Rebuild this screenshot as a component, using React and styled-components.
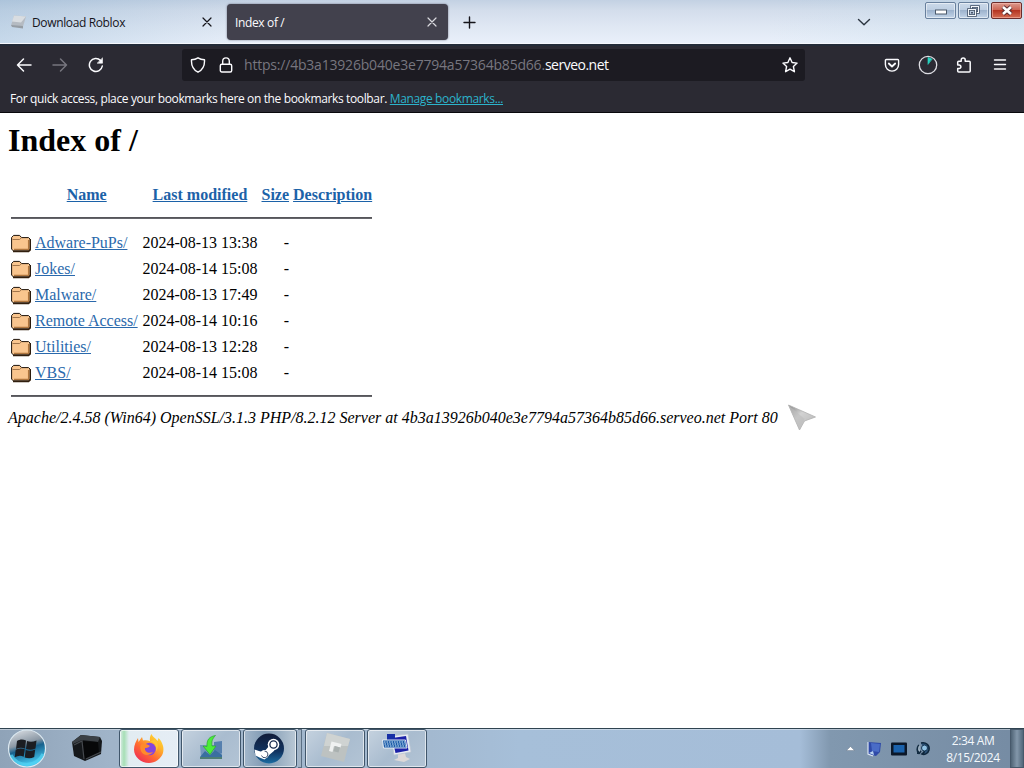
import React from "react";
import styled, { createGlobalStyle, css } from "styled-components";

const GlobalStyle = createGlobalStyle`
  * {
    box-sizing: border-box;
  }
  body {
    margin: 0;
    overflow: hidden;
    background: #fff;
  }
`;

const Screen = styled.div`
  width: 1024px;
  height: 768px;
  display: flex;
  flex-direction: column;
  overflow: hidden;
  position: relative;
  font-family: "Open Sans", "Noto Sans", sans-serif;
  font-size: 12px;
  letter-spacing: -0.36px;
`;

/* ---------- title bar ---------- */

const TitleBar = styled.div`
  height: 44px;
  flex: none;
  display: flex;
  border-bottom: 1px solid #f5f7fc;
  background:
    linear-gradient(90deg, rgba(120, 165, 200, 0.3), rgba(255, 255, 255, 0) 25%, rgba(255, 255, 255, 0) 75%, rgba(190, 220, 235, 0.3)),
    linear-gradient(180deg, #c3d1e3 0, #d3ddeb 10px, #dfe7f3 26px, #e9f0fa 43px);
`;

const Tab = styled.div`
  display: flex;
  align-items: center;
  height: 36px;
  margin-top: 4px;
  border-radius: 4px;
  color: #15141a;
  width: ${({ $width }) => $width}px;
  padding: 0 ${({ $right }) => $right}px 0 ${({ $left }) => $left}px;
  ${({ $active }) =>
    $active &&
    css`
      color: #fbfbfe;
      background: #42414d;
      box-shadow: 0 0 2px rgba(50, 50, 70, 0.7);
    `}
`;

const TabTitle = styled.span`
  flex: 1;
  padding-top: 2px;
  line-height: 18px;
  white-space: nowrap;
`;

const Favicon = styled.svg`
  width: 17px;
  height: 16px;
  margin-right: 5px;
`;

const Icon = styled.svg`
  display: block;
  flex: none;
  width: ${({ $size }) => $size || 16}px;
  height: ${({ $size }) => $size || 16}px;
  fill: none;
  stroke: currentColor;
  stroke-width: ${({ $stroke }) => $stroke || 1.4};
  stroke-linecap: round;
  stroke-linejoin: round;
`;

const CloseIcon = styled(Icon)`
  color: ${({ $color }) => $color};
`;

const LockIcon = styled(Icon)`
  margin-left: 12px;
`;

const NewTab = styled.div`
  padding: 14px 0 0 13px;
  color: #15141a;
  flex: 1;
`;

const TabList = styled.div`
  padding: 14px 53px 0 0;
  color: #2b3540;
`;

const WindowButtons = styled.div`
  display: flex;
  gap: 2px;
  padding: 2px 2px 0 0;
  align-items: flex-start;
`;

const WindowButton = styled.div`
  width: 31px;
  height: 17px;
  display: flex;
  align-items: center;
  justify-content: center;
  border: 1px solid #68809d;
  border-radius: 2px;
  box-shadow: inset 0 0 0 1px rgba(255, 255, 255, 0.5);
  background: linear-gradient(180deg, #cbd9e9 0, #bdcee2 45%, #9db3cd 50%, #c2d4e8 100%);
  ${({ $close }) =>
    $close &&
    css`
      border-color: #6b2c2b;
      box-shadow: inset 0 0 0 1px rgba(255, 200, 190, 0.5);
      background: linear-gradient(180deg, #dc9a8e 0, #cc6655 45%, #b53522 50%, #d46c52 100%);
    `}
`;

/* ---------- toolbars ---------- */

const NavBar = styled.div`
  height: 41px;
  flex: none;
  display: flex;
  align-items: center;
  padding-bottom: 2px;
  border-top: 2px solid #232b38;
  background: #2b2a33;
  color: #fbfbfe;
`;

const NavButtons = styled.div`
  width: 182px;
  display: flex;
  gap: 20px;
  padding-left: 16px;
`;

const Dim = styled.span`
  color: #77767f;
`;

const UrlBar = styled.div`
  width: 623px;
  height: 32px;
  display: flex;
  align-items: center;
  padding: 0 7px 0 8px;
  background: #1c1b22;
  border-radius: 3px;
`;

const Url = styled.span`
  flex: 1;
  padding: 1px 0 0 10px;
  font-size: 14px;
  line-height: 20px;
  white-space: nowrap;
  letter-spacing: -0.2px;
`;

const Host = styled.span`
  letter-spacing: -0.5px;
`;

const Extensions = styled.div`
  flex: 1;
  display: flex;
  align-items: center;
  justify-content: flex-end;
  gap: 18px;
  padding-right: 16px;

  svg:last-child {
    margin-left: 2px;
  }
`;

const BookmarksBar = styled.div`
  height: 28px;
  flex: none;
  padding: 5px 10px 0;
  line-height: 18px;
  color: #fbfbfe;
  background: #2b2a33;
  border-bottom: 1px solid #08080c;
  white-space: nowrap;
`;

const ManageLink = styled.a`
  color: #2cb3cb;
  text-decoration: underline;
`;

/* ---------- directory listing ---------- */

const Page = styled.main`
  flex: 1;
  padding: 9px 8px 8px;
  background: #fff;
  color: #000;
  font: 16px/18px "Liberation Serif", "Times New Roman", serif;
  letter-spacing: 0;
`;

const Heading = styled.h1`
  margin: 0 0 21px;
  font-size: 32px;
  line-height: 37px;
`;

const Listing = styled.table`
  border-spacing: 2px;
  border-collapse: separate;

  th,
  td {
    padding: 3px 1px 1px;
    height: 24px;
    white-space: nowrap;
  }

  td:first-child {
    padding-top: 1px;
  }

  th:nth-child(2) {
    min-width: 105.4px;
  }
`;

const RightCell = styled.td`
  text-align: right;
`;

const Rule = styled.hr`
  margin: 8px 0;
  height: 2px;
  border: 0;
  background: #65656a;
  border-top: 1px solid #55555a;
`;

const RuleCell = styled.th`
  && {
    height: 20px;
    padding-top: 1px;
  }
`;

const PageLink = styled.a`
  color: ${({ $head }) => ($head ? "#1c62a8" : "#2a69ac")};
  text-decoration: underline;
`;

const FolderSvg = styled.svg`
  display: block;
  width: 20px;
  height: 22px;
`;

const Address = styled.address`
  margin-top: 1px;
  font-style: italic;
  white-space: nowrap;
`;

/* ---------- taskbar ---------- */

const TaskBar = styled.div`
  height: 40px;
  flex: none;
  display: flex;
  border-top: 1px solid #2f4350;
  box-shadow: inset 0 1px 0 rgba(255, 255, 255, 0.4);
  background: linear-gradient(
    90deg,
    #8fa3b8 0,
    #a0b4c9 110px,
    #a3b9d0 430px,
    #a6bfd9 520px,
    #a5bdd8 800px,
    #8198af 830px,
    #758ba3 1024px
  );
`;

const StartButton = styled.div`
  width: 67px;
  padding: 0 0 0 7px;
`;

const Pinned = styled.div`
  width: 52px;
  padding: 4px 0 0 4px;
`;

const TaskButton = styled.div`
  width: ${({ $width }) => $width || 60}px;
  height: 39px;
  margin-right: 2px;
  padding-bottom: 2px;
  display: flex;
  align-items: center;
  justify-content: center;
  border: 1px solid #40566b;
  border-radius: 3px;
  box-shadow: inset 0 0 0 1px rgba(255, 255, 255, 0.6);
  background: ${({ $bg }) => $bg || "linear-gradient(135deg, #c5d2df, #a9bccf 50%, #b3c4d5)"};
`;

const Stack = styled.div`
  width: 4px;
  height: 39px;
  margin: 0 3px 0 -1px;
  border: 1px solid #5a6f84;
  border-left: 0;
  background: #a3b4c5;
`;

const Tray = styled.div`
  margin-left: auto;
  display: flex;
  align-items: center;
  gap: 9px;
`;

const TrayArrow = styled.svg`
  margin-right: 2px;
`;

const Clock = styled.div`
  width: 56px;
  margin-left: 4px;
  text-align: center;
  line-height: 17px;
  color: #f4f8fc;
  white-space: nowrap;
`;

const ShowDesktop = styled.div`
  width: 14px;
  height: 39px;
  border: 1px solid #47596b;
  background: linear-gradient(90deg, #4f6375, #8397aa 50%, #52677a);
`;

/* the mouse pointer floats over the page */
const Pointer = styled.svg`
  position: absolute;
  left: 786px;
  top: 402px;
  width: 34px;
  height: 32px;
`;

const rows = [
  ["Adware-PuPs/", "2024-08-13 13:38"],
  ["Jokes/", "2024-08-14 15:08"],
  ["Malware/", "2024-08-13 17:49"],
  ["Remote Access/", "2024-08-14 10:16"],
  ["Utilities/", "2024-08-13 12:28"],
  ["VBS/", "2024-08-14 15:08"],
];

const Close = ({ color }) => (
  <CloseIcon $size={10} $stroke={1.2} $color={color} viewBox="0 0 10 10">
    <path d="M1 1l8 8M9 1L1 9" />
  </CloseIcon>
);

const Folder = () => (
  <FolderSvg viewBox="0 0 20 22">
    <path d="M2 20.5h15.500l2-2V8" fill="none" stroke="#3a2410" strokeWidth="1.6" />
    <path d="M.6 18V6.500L2.600 4.400h6l2 2.200h7L19 8v10l-1.400 1.800H2.200z" fill="#f9c58e" stroke="#1c120a" />
    <path d="M1.500 8.500h7l2-1.800" fill="none" stroke="#8a6038" strokeWidth=".8" />
    <path d="M17.600 9v9.400H3" fill="none" stroke="#b0763e" strokeWidth="1.300" />
  </FolderSvg>
);

function Browser() {
  return (
    <>
      <TitleBar>
        <Tab $width={227} $left={10} $right={15}>
          <Favicon viewBox="0 0 17 16">
            <path d="M4 1.500l12 1-3 10-12-1z" fill="#b5bbc2" />
            <path d="M4 1.500l12 1-5 6-9-1z" fill="#d9dde1" />
            <path d="M1 11l12 1 0 2.500-11-1.500z" fill="#969da4" />
          </Favicon>
          <TabTitle>Download Roblox</TabTitle>
          <Close color="#15141a" />
        </Tab>
        <Tab $width={221} $left={8} $right={11} $active>
          <TabTitle>Index of /</TabTitle>
          <Close color="#d9d9de" />
        </Tab>
        <NewTab>
          <Icon viewBox="0 0 16 16">
            <path d="M8.500 3v11M3 8.500h11" />
          </Icon>
        </NewTab>
        <TabList>
          <Icon viewBox="0 0 16 16">
            <path d="M2.500 5.500L8 10.800l5.500-5.300" />
          </Icon>
        </TabList>
        <WindowButtons>
          <WindowButton>
            <svg width="14" height="8">
              <rect x="1.500" y="3" width="11" height="4" fill="#fff" stroke="#4c5a6b" />
            </svg>
          </WindowButton>
          <WindowButton>
            <svg width="13" height="12">
              <rect x="4.500" y="1.500" width="7" height="6" fill="none" stroke="#46556a" strokeWidth="2.600" />
              <rect x="4.500" y="1.500" width="7" height="6" fill="none" stroke="#f4f7fa" />
              <rect x="1.500" y="4.500" width="7" height="6" fill="#b5c5d8" stroke="#46556a" strokeWidth="2.600" />
              <rect x="1.500" y="4.500" width="7" height="6" fill="none" stroke="#f4f7fa" />
              <rect x="4" y="7" width="2" height="1.500" fill="#46556a" />
            </svg>
          </WindowButton>
          <WindowButton $close>
            <svg width="14" height="11">
              <path d="M3 2l8 7M11 2L3 9" stroke="#5a2c30" strokeWidth="4.500" />
              <path d="M3 2l8 7M11 2L3 9" stroke="#fff" strokeWidth="2.600" />
            </svg>
          </WindowButton>
        </WindowButtons>
      </TitleBar>

      <NavBar>
        <NavButtons>
          <Icon viewBox="0 0 16 16" $stroke={1.5}>
            <path d="M1.500 8h13.500M7.500 2L1.500 8l6 6" />
          </Icon>
          <Dim>
            <Icon viewBox="0 0 16 16" $stroke={1.5}>
              <path d="M1 8h13.500M8.500 2l6 6-6 6" />
            </Icon>
          </Dim>
          <Icon viewBox="0 0 16 16" $stroke={1.5}>
            <path d="M14.300 9A6.500 6.500 0 1 1 12.500 3.400" />
            <path d="M14.500 1.200v5h-5z" fill="currentColor" strokeWidth=".6" />
          </Icon>
        </NavButtons>
        <UrlBar>
          <Icon viewBox="0 0 16 16">
            <path d="M8 .8c2 1.300 4.300 1.800 6.500 1.900.3 5-1.500 10-6.500 12.500C3 12.700 1.200 7.700 1.500 2.700 3.700 2.600 6 2.100 8 .8z" />
          </Icon>
          <LockIcon viewBox="0 0 16 16">
            <rect x="2.300" y="7.300" width="11.400" height="7.700" rx="1.500" />
            <path d="M4.700 7V4.200a3.300 3.300 0 0 1 6.600 0V7" />
          </LockIcon>
          <Url>
            <Dim>https://4b3a13926b040e3e7794a57364b85d66.</Dim>
            <Host>serveo.net</Host>
          </Url>
          <Icon viewBox="0 0 16 16">
            <path d="M8 .8l2.100 4.700 5 .6-3.700 3.400 1 5.200L8 12.200l-4.400 2.500 1-5.200L.9 6.100l5-.6z" />
          </Icon>
        </UrlBar>
        <Extensions>
          <Icon viewBox="0 0 16 16" $stroke={1.4}>
            <path d="M2.300 2.500h11.400c.5 0 .9.400.9.900V7.500a6.600 6.600 0 0 1-13.200 0V3.400c0-.5.4-.9.900-.9z" />
            <path d="M4.800 6.500L8 9.500l3.200-3" strokeWidth="1.800" />
          </Icon>
          <Icon $size={20} viewBox="0 0 20 20" $stroke={1.3}>
            <circle cx="10" cy="10" r="8.700" stroke="#dddde3" />
            <path d="M10 9V2.500l3.800 1.500z" fill="#27d5c2" stroke="#27d5c2" strokeWidth=".7" />
          </Icon>
          <Icon viewBox="0 0 16 16" $stroke={1.5}>
            <path d="M5.200 4.300V3a2 2 0 0 1 4 0v1.300h4c.6 0 1 .4 1 1V14c0 .6-.4 1-1 1H2.700c-.6 0-1-.4-1-1v-2.500h1.500a1.700 1.700 0 0 0 0-3.400H1.700V5.300c0-.6.4-1 1-1z" />
          </Icon>
          <Icon viewBox="0 0 16 16" $stroke={1.4}>
            <path d="M2.500 3h11M2.500 7.500h11M2.500 12h11" />
          </Icon>
        </Extensions>
      </NavBar>
      <BookmarksBar>
        For quick access, place your bookmarks here on the bookmarks toolbar.{" "}
        <ManageLink>Manage bookmarks...</ManageLink>
      </BookmarksBar>
    </>
  );
}

function DirectoryIndex() {
  return (
    <Page>
      <Heading>Index of /</Heading>
      <Listing>
        <tbody>
          <tr>
            <th></th>
            <th>
              <PageLink $head>Name</PageLink>
            </th>
            <th>
              <PageLink $head>Last modified</PageLink>
            </th>
            <th>
              <PageLink $head>Size</PageLink>
            </th>
            <th>
              <PageLink $head>Description</PageLink>
            </th>
          </tr>
          <tr>
            <RuleCell colSpan={5}>
              <Rule />
            </RuleCell>
          </tr>
          {rows.map(([name, modified]) => (
            <tr key={name}>
              <td>
                <Folder />
              </td>
              <td>
                <PageLink>{name}</PageLink>
              </td>
              <RightCell>{modified}</RightCell>
              <RightCell>-</RightCell>
              <td></td>
            </tr>
          ))}
          <tr>
            <RuleCell colSpan={5}>
              <Rule />
            </RuleCell>
          </tr>
        </tbody>
      </Listing>
      <Address>
        Apache/2.4.58 (Win64) OpenSSL/3.1.3 PHP/8.2.12 Server at
        4b3a13926b040e3e7794a57364b85d66.serveo.net Port 80
      </Address>
    </Page>
  );
}

function WindowsTaskBar() {
  return (
    <TaskBar>
      <StartButton>
        <svg width="40" height="39" viewBox="0 0 40 39">
          <defs>
            <linearGradient id="orb" x1="0" y1="0" x2="0.3" y2="1">
              <stop offset="0" stopColor="#e4e7eb" />
              <stop offset=".45" stopColor="#8b98a5" />
              <stop offset=".6" stopColor="#17618d" />
              <stop offset="1" stopColor="#43c6ee" />
            </linearGradient>
          </defs>
          <circle cx="20" cy="19.500" r="18.500" fill="url(#orb)" stroke="#dce9f1" strokeWidth="1.200" />
          <path d="M4 26a18 18 0 0 0 32-1" fill="none" stroke="#54d4f4" strokeWidth="3" opacity=".7" />
          <path d="M10 12c3-2 6-2 9-.5l-1 8c-3-1-6-1-9 .5z" fill="#1b1d22" />
          <path d="M20 12c3 1.200 6 1 9.500-.5l-1 8c-3 1.500-6 1.500-9.500.5z" fill="#1b1d22" />
          <path d="M8.700 20.700c3-1.500 6-1.500 9-.5l-1 7.500c-3-1.500-6-1-9 .5z" fill="#1b1d22" />
          <path d="M18.700 21c3 1.200 6 1 9.500-.5l-1 7.500c-3 1.500-6 1.500-9.500.5z" fill="#1b1d22" />
        </svg>
      </StartButton>
      <Pinned>
        <svg width="32" height="30" viewBox="0 0 32 30">
          <path d="M1 9L10 2l19 2 2 4-1 13-16 7L3 23z" fill="#15181b" />
          <path d="M10 2l19 2-2 5-16-2-9 4-1-2z" fill="#3b4045" />
          <path d="M11 8l16 1 1 11-15 6z" fill="#070809" />
          <path d="M3 12l8-4 2 18M15 26l15-7" fill="none" stroke="#45494e" strokeWidth="1.200" />
        </svg>
      </Pinned>
      <TaskButton $bg="linear-gradient(90deg, #dcebe9 0, #a6dfb5 4px, #e2ecf2 9px, #e5edf5 100%)">
        <svg width="32" height="32" viewBox="0 0 32 32">
          <defs>
            <linearGradient id="fox" x1="1" y1="0" x2=".2" y2="1">
              <stop offset="0" stopColor="#ffe83b" />
              <stop offset=".35" stopColor="#ffb52b" />
              <stop offset=".65" stopColor="#ff6a32" />
              <stop offset="1" stopColor="#ef2a58" />
            </linearGradient>
          </defs>
          <path
            d="M18.500 2c1 3 4 4 6 7l1-3c4 4 6 10 4.500 15-2 6-8 10-14 10C8 31 1 25 1 17.500 1 13 3 9 5 6l.5 4 3.500-5 1 3.500c3-.5 5-.3 7 .8-.5-3 0-5.300 1.500-7.300z"
            fill="url(#fox)"
          />
          <circle cx="16.500" cy="17" r="6.300" fill="#8446dc" />
          <path d="M8 12.500c3-2 7 0 9 1.500-2 2-4 2-5 2-.5 4 4 6 8 4-2 3.500-10 4.500-12-1-1-3-1-4.500 0-6.500z" fill="#ff8a2c" />
          <path d="M17 9.500c5 1 7 5 6 10 3-4 2-10-1-12z" fill="#ffc833" />
        </svg>
      </TaskButton>
      <TaskButton>
        <svg width="28" height="28" viewBox="0 0 28 28">
          <path d="M3 11h21l1 12H4z" fill="#7597bd" />
          <path d="M17 8l8-1 0 12-8 2z" fill="#557fae" />
          <path d="M3 23l5-6 5 4 5-5 7 5v2z" fill="#3a6fa0" />
          <path d="M3 24h22" stroke="#2f6a55" strokeWidth="1.500" />
          <path d="M18.500 1.500c-6 1-9 4-8.500 11L6 12l7 8.500L19 12h-4c-.5-4 0-7 3.500-10.500z" fill="#4bed38" stroke="#2ba630" strokeWidth=".7" />
        </svg>
      </TaskButton>
      <TaskButton $width={54} $bg="linear-gradient(90deg, #a3b7cb, #7f99b2 40%, #b9c8d5)">
        <svg width="32" height="32" viewBox="0 0 32 32">
          <defs>
            <linearGradient id="steam" x1="0" y1="0" x2="0" y2="1">
              <stop offset="0" stopColor="#111c38" />
              <stop offset=".6" stopColor="#103360" />
              <stop offset="1" stopColor="#1b6ca2" />
            </linearGradient>
          </defs>
          <circle cx="15" cy="16.500" r="15" fill="url(#steam)" />
          <path d="M.5 17.500l9 3 6-7 5 5-6 5-4 4-5-2-4-2z" fill="#fff" />
          <circle cx="19.500" cy="12.500" r="5.800" fill="#fff" />
          <circle cx="19.500" cy="12.500" r="3.600" fill="none" stroke="#17294c" strokeWidth="1.300" />
          <circle cx="10.500" cy="22.300" r="4.300" fill="#fff" />
          <path d="M7.500 23.500a3.300 3.300 0 1 0 3-4.400" fill="none" stroke="#17294c" strokeWidth=".8" />
        </svg>
      </TaskButton>
      <Stack />
      <TaskButton>
        <svg width="32" height="32" viewBox="0 0 32 32">
          <path d="M8 1l23 6-6 23-23-6z" fill="#bdc2c1" />
          <path d="M8 1l23 6-2 7L5 14z" fill="#cfd3d2" />
          <path d="M12.500 9.500l10 2.500-1 3.500-6.500-1.500-1.500 6-3.500-1z" fill="#eff1f1" />
          <path d="M16 14l5 1.500-1.500 5-5-1.200z" fill="#a9b0af" />
        </svg>
      </TaskButton>
      <TaskButton>
        <svg width="32" height="32" viewBox="0 0 32 32">
          <path d="M17 22l7-1 1 4 4 2-6 3-10-2 4-2z" fill="#ddd9d8" />
          <path d="M10 4l17-2 3 18-17 3z" fill="#e8edf3" stroke="#b9c3d0" strokeWidth=".7" />
          <path d="M11 6l14-2 2.500 14.500-13 2.500z" fill="#1c22a8" />
          <path d="M6 2h8v6H6z" fill="#172fa6" />
          <path d="M1.500 8h23l1.500 8H2.500z" fill="#1d5ca8" stroke="#f0f6fa" strokeWidth=".9" />
          <path d="M3 10h21M3.500 12h21M4 14h21" stroke="#cfe6f8" strokeWidth="1" strokeDasharray="1.500 1" />
        </svg>
      </TaskButton>
      <Tray>
        <TrayArrow width="9" height="5" viewBox="0 0 9 5">
          <path d="M.5 4.500L4.500.5l4 4z" fill="#fff" stroke="#5b6b7c" strokeWidth=".4" />
        </TrayArrow>
        <svg width="16" height="16" viewBox="0 0 16 16">
          <path d="M2 1l13 1-1 9-4 4-8-2z" fill="#2f4aa8" />
          <path d="M5 2l9 1-1 8-7-1z" fill="#4a6cc6" />
          <path d="M2 1v12l5 2" stroke="#dbe5f2" strokeWidth="1.200" fill="none" />
          <path d="M3 12l4-2 1 4z" fill="#b9d3f0" />
        </svg>
        <svg width="16" height="14" viewBox="0 0 16 14">
          <rect width="16" height="13" y=".5" rx="1" fill="#0b1728" />
          <rect x="2.500" y="3" width="11" height="7.500" fill="#1b62ac" />
        </svg>
        <svg width="16" height="16" viewBox="0 0 16 16">
          <path d="M5 2c5-1 9 2 8 7-1 4-5 5-7 4 2-1 3-2 2-4" fill="#2d5278" stroke="#0e263c" strokeWidth="1.500" />
          <circle cx="8.500" cy="7" r="3" fill="#91c1e2" stroke="#163553" />
          <path d="M3 4c-2 3-2 6 0 8l2-2M1 12h3" fill="none" stroke="#132c42" strokeWidth="2" />
          <path d="M3.500 4.500c-1 2-1 4 0 6" fill="none" stroke="#dbe9f3" strokeWidth=".8" />
        </svg>
        <Clock>
          2:34 AM
          <br />
          8/15/2024
        </Clock>
        <ShowDesktop />
      </Tray>
    </TaskBar>
  );
}

function App() {
  return (
    <>
      <GlobalStyle />
      <Screen>
        <Browser />
        <DirectoryIndex />
        <WindowsTaskBar />
        <Pointer viewBox="0 0 34 32">
          <defs>
            <linearGradient id="pointer" x1="0" y1="0" x2="1" y2="1">
              <stop offset="0" stopColor="#858585" />
              <stop offset=".4" stopColor="#d2d2d2" />
              <stop offset="1" stopColor="#b4b4b4" />
            </linearGradient>
          </defs>
          <path d="M2.500 3l27 12-11 4-5 9z" fill="url(#pointer)" stroke="#b0b0b0" strokeWidth=".8" />
          <path d="M2.500 3l16 14-5 11z" fill="#bcbcbc" opacity=".6" />
        </Pointer>
      </Screen>
    </>
  );
}

export default App;
